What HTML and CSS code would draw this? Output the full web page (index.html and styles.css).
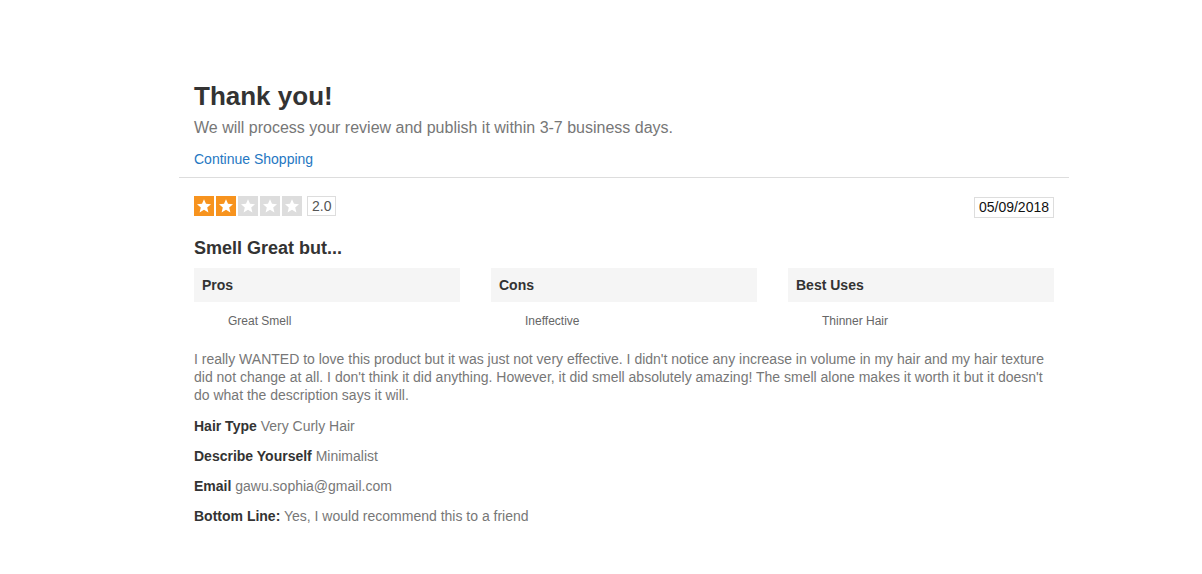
FILE: index.html
```html
<!DOCTYPE html>
<html>
<head>
<meta charset="utf-8">
<link rel="stylesheet" href="styles.css">
</head>
<body>
<div class="page">
  <div class="thanks">
    <h1 class="title">Thank you!</h1>
    <p class="sub">We will process your review and publish it within 3-7 business days.</p>
    <a class="link" href="#">Continue Shopping</a>
  </div>
  <div class="review">
    <div class="meta">
      <div class="rating">
        <span class="star on"><svg viewBox="0 0 20 20"><path d="M10 3.2l2 4.6 5 .4-3.8 3.3 1.2 4.9L10 13.8 5.6 16.4l1.2-4.9L3 8.2l5-.4z"/></svg></span>
        <span class="star on"><svg viewBox="0 0 20 20"><path d="M10 3.2l2 4.6 5 .4-3.8 3.3 1.2 4.9L10 13.8 5.6 16.4l1.2-4.9L3 8.2l5-.4z"/></svg></span>
        <span class="star"><svg viewBox="0 0 20 20"><path d="M10 3.2l2 4.6 5 .4-3.8 3.3 1.2 4.9L10 13.8 5.6 16.4l1.2-4.9L3 8.2l5-.4z"/></svg></span>
        <span class="star"><svg viewBox="0 0 20 20"><path d="M10 3.2l2 4.6 5 .4-3.8 3.3 1.2 4.9L10 13.8 5.6 16.4l1.2-4.9L3 8.2l5-.4z"/></svg></span>
        <span class="star"><svg viewBox="0 0 20 20"><path d="M10 3.2l2 4.6 5 .4-3.8 3.3 1.2 4.9L10 13.8 5.6 16.4l1.2-4.9L3 8.2l5-.4z"/></svg></span>
        <span class="score">2.0</span>
      </div>
      <span class="date">05/09/2018</span>
    </div>
    <h2 class="rtitle">Smell Great but...</h2>
    <div class="cols">
      <div class="col">
        <div class="colhead">Pros</div>
        <div class="colitem">Great Smell</div>
      </div>
      <div class="col">
        <div class="colhead">Cons</div>
        <div class="colitem">Ineffective</div>
      </div>
      <div class="col">
        <div class="colhead">Best Uses</div>
        <div class="colitem">Thinner Hair</div>
      </div>
    </div>
    <p class="body">I really WANTED to love this product but it was just not very effective. I didn't notice any increase in volume in my hair and my hair texture did not change at all. I don't think it did anything. However, it did smell absolutely amazing! The smell alone makes it worth it but it doesn't do what the description says it will.</p>
    <p class="attr"><b>Hair Type</b> Very Curly Hair</p>
    <p class="attr"><b>Describe Yourself</b> Minimalist</p>
    <p class="attr"><b>Email</b> gawu.sophia@gmail.com</p>
    <p class="attr"><b>Bottom Line:</b> Yes, I would recommend this to a friend</p>
  </div>
</div>
</body>
</html>
```

FILE: styles.css
```css
html, body {
  margin: 0;
  padding: 0;
  background: #fff;
}
body {
  font-family: "Liberation Sans", Arial, sans-serif;
  color: #777;
}
.page {
  width: 890px;
  margin-left: 179px;
  padding-top: 80px;
}
.thanks {
  padding: 0 15px 9px;
  border-bottom: 1px solid #ddd;
}
.title {
  margin: 0;
  font-size: 26px;
  line-height: 32px;
  font-weight: bold;
  color: #333;
}
.sub {
  margin: 5px 0 0;
  font-size: 16px;
  line-height: 22px;
  color: #777;
}
.link {
  display: inline-block;
  margin-top: 11px;
  font-size: 14px;
  line-height: 18px;
  color: #2577c2;
  text-decoration: none;
}
.review {
  padding: 18px 15px 0;
}
.meta {
  display: flex;
  justify-content: space-between;
  align-items: flex-start;
}
.rating {
  display: flex;
  align-items: center;
  gap: 2px;
}
.star {
  display: block;
  width: 20px;
  height: 20px;
  background: #dddddd;
}
.star.on {
  background: #f7931e;
}
.star svg {
  display: block;
  width: 20px;
  height: 20px;
  fill: #fff;
}
.score {
  margin-left: 3px;
  border: 1px solid #ddd;
  padding: 0 4px;
  height: 18px;
  line-height: 18px;
  font-size: 14px;
  color: #555;
}
.date {
  border: 1px solid #ddd;
  padding: 0 4px;
  height: 19px;
  line-height: 19px;
  font-size: 14px;
  color: #111;
  margin-top: 1px;
}
.rtitle {
  margin: 19px 0 0;
  font-size: 18px;
  line-height: 22px;
  font-weight: bold;
  color: #333;
}
.cols {
  margin-top: 9px;
  display: grid;
  grid-template-columns: repeat(3, 1fr);
  column-gap: 31px;
}
.colhead {
  background: #f5f5f5;
  height: 34px;
  line-height: 34px;
  padding: 0 8px;
  font-size: 14px;
  font-weight: bold;
  color: #333;
}
.colitem {
  padding: 11px 0 0 34px;
  font-size: 12px;
  line-height: 16px;
  color: #666;
}
.body {
  margin: 21px 0 0;
  font-size: 14px;
  line-height: 18.2px;
  color: #777;
}
.attr {
  margin: 0;
  margin-top: 12px;
  font-size: 14px;
  line-height: 18px;
  color: #777;
}
.attr b {
  color: #333;
}
```
